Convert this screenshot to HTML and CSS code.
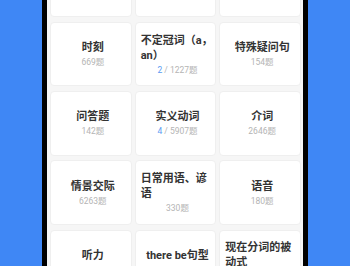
FILE: index.html
```html
<!DOCTYPE html>
<html lang="zh-CN">
<head>
<meta charset="utf-8">
<link rel="stylesheet" href="styles.css">
</head>
<body>
<div class="phone">
  <div class="grid">
    <div class="card"></div>
    <div class="card"></div>
    <div class="card"></div>

    <div class="card"><div class="title">时刻</div><div class="count">669题</div></div>
    <div class="card"><div class="title">不定冠词（a，an）</div><div class="count"><span class="done">2</span> / 1227题</div></div>
    <div class="card"><div class="title">特殊疑问句</div><div class="count">154题</div></div>

    <div class="card"><div class="title">问答题</div><div class="count">142题</div></div>
    <div class="card"><div class="title">实义动词</div><div class="count"><span class="done">4</span> / 5907题</div></div>
    <div class="card"><div class="title">介词</div><div class="count">2646题</div></div>

    <div class="card"><div class="title">情景交际</div><div class="count">6263题</div></div>
    <div class="card"><div class="title">日常用语、谚语</div><div class="count">330题</div></div>
    <div class="card"><div class="title">语音</div><div class="count">180题</div></div>

    <div class="card"><div class="title">听力</div><div class="count"></div></div>
    <div class="card"><div class="title">there be句型</div><div class="count"></div></div>
    <div class="card"><div class="title">现在分词的被动式</div><div class="count"></div></div>
  </div>
</div>
</body>
</html>
```

FILE: styles.css
```css
html, body {
  margin: 0;
  padding: 0;
  height: 100%;
}
body {
  background: #3f87f5;
  display: flex;
  justify-content: center;
  font-family: Roboto, "Noto Sans CJK SC", sans-serif;
  overflow: hidden;
}
.phone {
  width: 256px;
  height: 266px;
  border-left: 5px solid #000;
  border-right: 5px solid #000;
  background: #f6f6f6;
  overflow: hidden;
}
.grid {
  display: grid;
  grid-template-columns: repeat(3, 1fr);
  grid-auto-rows: 64.5px;
  column-gap: 3px;
  row-gap: 4.8px;
  padding: 0 2px 0 3px;
  margin-top: -47.5px;
}
.card {
  background: #fff;
  border: 1px solid #efefef;
  border-radius: 4px;
  display: flex;
  flex-direction: column;
  align-items: center;
  justify-content: center;
  padding: 0 1px 0 5px;
  min-width: 0;
}
.title {
  font-size: 11px;
  line-height: 15px;
  font-weight: 700;
  color: #333;
  text-align: left;
}
.count {
  margin-top: 2px;
  font-size: 8.5px;
  line-height: 11px;
  height: 11px;
  color: #b4b4b4;
  text-align: center;
}
.done {
  color: #5a9af2;
}
```
